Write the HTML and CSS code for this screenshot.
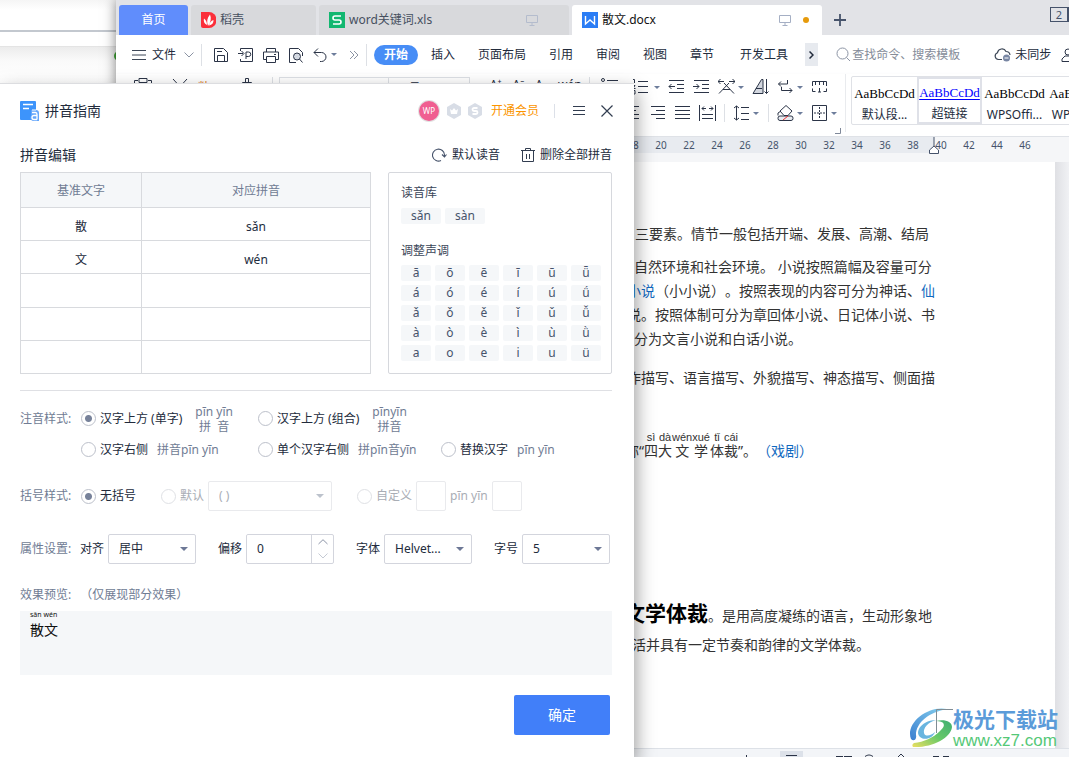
FILE: index.html
```html
<!DOCTYPE html>
<html lang="zh-CN">
<head>
<meta charset="utf-8">
<title>散文.docx</title>
<link rel="stylesheet" href="styles.css">
</head>
<body>
<div class="desktop">
  <div class="back-window"><div class="back-top"></div><div class="back-bar"></div><div class="back-body"><i class="back-dot"></i></div></div>

  <main class="app">
    <nav class="tabs">
      <button class="tab tab-home">首页</button>
      <button class="tab tab-docer">
        <svg width="15" height="16" viewBox="0 0 15 16"><path d="M0 0h8a7.500 8 0 0 1 0 16H2a2 2 0 0 1-2-2z" fill="#fb2f3a"/><path d="M7 14C5.500 10 6 6 9 2.500 10.500 6 10 10 7 14zM6 13C3 11.500 2.300 9 3 6.500 5 8 6 10 6 13zM8 13.500c.5-3 2-4.500 4.500-5.500.2 3-1.500 5-4.500 5.500z" fill="#fff"/></svg>
        <span>稻壳</span></button>
      <button class="tab tab-file">
        <svg width="16" height="16" viewBox="0 0 16 16"><rect width="16" height="16" fill="#12b770"/><path d="M12 4H6a2 2 0 0 0 0 4h4a2 2 0 0 1 0 4H4" fill="none" stroke="#fff" stroke-width="1.600"/></svg>
        <span>word关键词.xls</span>
        <svg class="screen" width="12" height="12" viewBox="0 0 12 12"><path d="M.5 1.500h11v7H.5zM6 8.500v3M3.500 11.500h5" fill="none" stroke="#b4bccd"/></svg></button>
      <button class="tab tab-file tab-current">
        <svg width="16" height="16" viewBox="0 0 16 16"><rect width="16" height="16" fill="#2b7df5"/><path d="M3.500 4v8L8 8l4.500 4V4" fill="none" stroke="#fff" stroke-width="1.400"/></svg>
        <span>散文.docx</span>
        <svg class="screen" width="12" height="12" viewBox="0 0 12 12"><path d="M.5 1.500h11v7H.5zM6 8.500v3M3.500 11.500h5" fill="none" stroke="#a5afc4"/></svg>
        <i class="unsaved"></i></button>
      <button class="plain add" aria-label="新建"><svg width="12" height="12" viewBox="0 0 12 12"><path d="M6 0v12M0 6h12" stroke="#46536b" stroke-width="1.800"/></svg></button>
      <span class="win-count">2</span>
    </nav>

    <div class="menu">
      <button class="plain file"><svg width="14" height="12" viewBox="0 0 14 12"><path d="M0 1.500h14M0 6h14M0 10.500h14" stroke="#3d4757"/></svg>文件<svg width="10" height="6" viewBox="0 0 10 6"><path d="M.5.5 5 5 9.500.5" fill="none" stroke="#8b93a3"/></svg></button>
      <i class="vsep"></i>
      <div class="quick">
        <svg width="16" height="16" viewBox="0 0 16 16"><path d="M1.500 1.500h9l4 4v9h-13zM4.500 14V8.500h7V14M4 4.500h5" /></svg>
        <svg width="16" height="16" viewBox="0 0 16 16"><path d="M2.500 4V1.500h12v13h-12V12M0 6.500h5M3.500 4l2.500 2.500L3.500 9M8 12V5h2.500a2 2 0 0 1 0 4.500H8"/></svg>
        <svg width="16" height="16" viewBox="0 0 16 16"><path d="M3.500 5V1.500h9V5M3.500 12.500h-3V5h15v7.500h-3M3.500 9.500h9v6h-9zM11 7.500h2"/></svg>
        <svg width="16" height="16" viewBox="0 0 16 16"><path d="M8 15.500H1.500v-14h9l4 4V9"/><circle cx="9" cy="9.500" r="3.500" fill="#d5dae2"/><path d="m11.500 12 3 3.500"/></svg>
        <svg width="14" height="14" viewBox="0 0 14 14"><path d="M5 .5 1 4.500l4 4M1 4.500h7.500a4.500 4.500 0 0 1 0 9H7"/></svg>
        <i class="caret"></i>
        <svg class="more" width="10" height="10" viewBox="0 0 10 10"><path d="m1 1 4 4-4 4M5 1l4 4-4 4"/></svg>
      </div>
      <i class="vsep"></i>
      <div class="ribbon-tabs">
        <button class="ribbon-tab active">开始</button><button class="ribbon-tab">插入</button><button class="ribbon-tab">页面布局</button><button class="ribbon-tab">引用</button><button class="ribbon-tab">审阅</button><button class="ribbon-tab">视图</button><button class="ribbon-tab">章节</button><button class="ribbon-tab last">开发工具</button>
      </div>
      <button class="plain next" aria-label="更多选项卡"><svg width="5" height="8" viewBox="0 0 5 8"><path d="m.5.5 3.500 3.500L.5 7.500" fill="none" stroke="#222b3c" stroke-width="1.500"/></svg></button>
      <button class="plain search"><svg width="15" height="15" viewBox="0 0 15 15"><path d="m10.500 10.500 3.500 3.500" stroke="#8d95a5"/><circle cx="6.500" cy="6.500" r="5.500" fill="none" stroke="#8d95a5"/></svg>查找命令、搜索模板</button>
      <button class="plain sync"><svg width="17" height="15" viewBox="0 0 17 15"><path d="M8 12.500H4.500A3.500 3.500 0 0 1 3.500 5.700 4.500 4.500 0 0 1 12 4.500a4 4 0 0 1 4 3.500" fill="none" stroke="#3d4757" stroke-width="1.200"/><circle cx="12.500" cy="11" r="3.500" fill="#7886a3"/><path d="M10.500 11h4" stroke="#fff"/></svg>未同步</button>
      <svg class="person" width="14" height="14" viewBox="0 0 14 14"><circle cx="7" cy="4" r="3"/><path d="M1 13.500V11l3-3h6l3 3v2.500z"/></svg>
    </div>

    <div class="tools">
      <div class="tools-left">
        <svg width="18" height="18" viewBox="0 0 18 18"><path d="M4 3.500H.5V17h17V3.500H14M5 1.500h8v4H5z"/></svg>
        <svg width="16" height="18" viewBox="0 0 16 18"><path d="m1 2 11 12M15 2 4 14"/></svg>
        <span class="orange">粘贴</span>
        <svg width="10" height="18" viewBox="0 0 10 18"><path d="M3.500 5V1.500h3V5M.5 5.500h9v8h-9z"/></svg>
        <i class="vsep"></i>
        <div class="font-box"><span>Helvetica</span><span>五号</span></div>
        <span class="glyph">A⁺</span><span class="glyph">A⁻</span><span class="glyph">A</span><span class="glyph">wén</span>
        <i class="vsep"></i>
        <svg width="17" height="16" viewBox="0 0 17 16"><circle cx="2" cy="3" r="1.500"/><circle cx="2" cy="12" r="1.500"/><path d="M6 3.500h11M6 12.500h11"/></svg>
      </div>
      <div class="tools-para">
        <div class="tool-row">
          <svg width="18" height="16" viewBox="0 0 18 16"><path d="M1 .5h1.500V4M1 6.500h2L1 9.500h2.500M1 11.500h2v3.500H1M6 2.500h10M6 7.500h10M6 13.500h10"/></svg><i class="caret"></i>
          <svg class="wide" width="17" height="16" viewBox="0 0 17 16"><path d="M1 1.500h15M9 5.500h7M9 9.500h7M1 13.500h15M7 7.500H1M3.500 5 1 7.500 3.500 10"/></svg>
          <svg class="wide" width="17" height="16" viewBox="0 0 17 16"><path d="M1 1.500h15M9 5.500h7M9 9.500h7M1 13.500h15M0 7.500h6M3.500 5 6 7.500 3.500 10"/></svg>
          <svg class="wide" width="17" height="16" viewBox="0 0 17 16"><path d="M0 2.500h6M11 2.500h6M2.500 0 0 2.500 2.500 5M14.500 0 17 2.500 14.500 5M1 14.500 11 4M6 4l10 10.500M5 10.500h7"/></svg><i class="caret"></i>
          <svg class="wide" width="17" height="16" viewBox="0 0 17 16"><path d="M1 14.500h10V.5L9.500.5zM4 9.500h6" fill="#d3d7df"/><path d="M14.500 0v14.500M12.500 12.500l2 2 2-2"/></svg>
          <svg class="wide" width="17" height="16" viewBox="0 0 17 16"><path d="M10.500 1v4H1.500M4 2.500 1.500 5 4 7.500M4.500 8v3.500H15M12.500 9l2.500 2.500-2.500 2.500"/></svg><i class="caret"></i>
          <svg class="wide" width="17" height="16" viewBox="0 0 17 16"><path d="M1.500 7V2.500h14V7M4.500 3v3M8.500 3v3M12.500 3v3M1.500 9.500v3h3M15.500 9.500v3h-3M8.500 9v4M7 13h3"/></svg>
        </div>
        <div class="tool-row">
          <svg width="8" height="16" viewBox="0 0 8 16"><path d="M0 1.500h6M0 5.500h3M0 9.500h6M0 13.500h6"/></svg>
          <svg width="17" height="16" viewBox="0 0 17 16"><path d="M2 1.500h14M7 5.500h9M2 9.500h14M7 13.500h9"/></svg>
          <svg width="17" height="16" viewBox="0 0 17 16"><path d="M1 1.500h15M1 5.500h15M1 9.500h15M1 13.500h15"/></svg>
          <svg width="17" height="16" viewBox="0 0 17 16"><path d="M.5 0v16M16.500 0v16M3 3.500h4M10 3.500h4M5 1.500l-2 2 2 2M12 1.500l2 2-2 2M3 9.500h11M3 13.500h11"/></svg>
          <i class="vsep"></i>
          <svg width="17" height="16" viewBox="0 0 17 16"><path d="M3.500 1v14M1 3l2.500-2L6 3M1 13l2.500 2L6 13M8 2.500h8M8 8.500h8M8 14.500h8"/></svg><i class="caret"></i>
          <i class="vsep"></i>
          <svg width="17" height="16" viewBox="0 0 17 16"><path d="m9 .5 6 5.500-4 4.500H7L3 6zM1 10.500V8l3-2"/><rect x="1" y="11" width="15" height="4.500" rx="2" fill="#e8ebf0"/><path d="m6 15 5-4" stroke="#e33"/></svg><i class="caret"></i>
          <svg width="17" height="16" viewBox="0 0 17 16"><path d="M1.500.5h14v15h-14z"/><path d="M8.500 2v12M3 8h11" stroke-dasharray="2 1"/></svg><i class="caret"></i>
        </div>
        <svg class="corner" width="6" height="6" viewBox="0 0 6 6"><path d="M5.500 0v5.500H0"/></svg>
      </div>
      <i class="tools-end"></i>
      <div class="gallery">
        <button class="style"><span>AaBbCcDd</span><b>默认段...</b></button>
        <button class="style link"><span>AaBbCcDd</span><b>超链接</b></button>
        <button class="style"><span>AaBbCcDd</span><b>WPSOffi...</b></button>
        <button class="style"><span>AaBbCcDd</span><b>WPSOffi...</b></button>
      </div>
    </div>

    <div class="ruler">
      <div class="ruler-used"><span>18</span><span>20</span><span>22</span><span>24</span><span>26</span><span>28</span><span>30</span><span>32</span><span>34</span><span>36</span><span>38</span></div>
      <svg class="indent" width="10" height="17" viewBox="0 0 10 17"><path d="M5 0v9M.5 16.500V13L5 9l4.500 4v3.500z" fill="#fff" stroke="#46536b"/></svg>
      <div class="ruler-rest"><span>40</span><span>42</span><span>44</span><span>46</span></div>
    </div>

    <div class="canvas">
      <article class="page">
        <p class="line shift">三要素。情节一般包括开端、发展、高潮、结局</p>
        <p class="line shift snug">自然环境和社会环境。&nbsp;小说按照篇幅及容量可分</p>
        <p class="line"><a href="#">小说</a>（小小说）。按照表现的内容可分为神话、<a href="#">仙</a></p>
        <p class="line">说。按照体制可分为章回体小说、日记体小说、书</p>
        <p class="line shift snug">分为文言小说和白话小说。</p>
        <p class="line speech">作描写、语言描写、外貌描写、神态描写、侧面描</p>
        <p class="line annotated"><span>称“<ruby>四<rt>sì</rt></ruby><ruby>大<rt>dà</rt></ruby><ruby>文<rt>wén</rt></ruby><ruby>学<rt>xué</rt></ruby><ruby>体<rt>tǐ</rt></ruby><ruby>裁<rt>cái</rt></ruby>”。<a href="#">（戏剧）</a></span></p>
        <p class="line poem"><strong>文学体裁</strong>。是用高度凝练的语言，生动形象地</p>
        <p class="line rhythm">活并具有一定节奏和韵律的文学体裁。</p>
      </article>
      <div class="scroll"></div>
    </div>
    <footer class="status">
      <svg width="210" height="8" viewBox="0 0 210 8"><path d="M6.500 6v2M96 7.500h7M104 7.500h8M125 7.500c3-2 5-2 8 0M158 8l3-3 3 3M193 7.500h6M203 7.500h6"/><rect x="40" y="2" width="23" height="6" fill="#dce1e9" stroke="none"/><path d="M46 6.500h11"/></svg>
    </footer>
  </main>

  <div class="watermark">
    <svg width="44" height="42" viewBox="0 0 44 42"><defs><linearGradient id="wb" x1="0" y1="1" x2="1" y2="0"><stop offset="0" stop-color="#3b7fd0"/><stop offset="1" stop-color="#86d1ee"/></linearGradient><linearGradient id="wg" x1="0" y1="1" x2="1" y2="0"><stop offset="0" stop-color="#ecdf62"/><stop offset=".5" stop-color="#68c968"/><stop offset="1" stop-color="#3fae72"/></linearGradient></defs><path d="M38 2C18-2-4 17 2 32c3 3 6 0 5-4C7 15 21 5 38 2z" fill="url(#wb)"/><path d="M27 13C14 13 5 24 11 30c5 4 13 1 15-5-4 4-10 5-11 1-1-5 4-11 12-13z" fill="#69b5df"/><path d="M27 14c8 0 11 4 4 10C24 31 15 35 5 36c-2 1-2 3-1 4C23 41 42 31 43 20c0-6-8-8-16-6z" fill="url(#wg)"/><path d="M27.500 26V2.500H44" fill="none" stroke="#7f8c94" stroke-width="1"/></svg>
    <div class="mark-text"><strong>极光下载站</strong><span>www.xz7.com</span></div>
  </div>

  <section class="dialog" role="dialog" aria-labelledby="dlg-title">
    <header class="dlg-head">
      <svg width="20" height="22" viewBox="0 0 20 22"><rect y="1" width="16" height="19" rx="1" fill="#3d94fb"/><path d="M3 4.500h10M3 8.500h6" stroke="#fff" stroke-width="1.300"/><path d="M11 10h5a3 3 0 0 1 3 3v8h-6a3 3 0 0 1-2-5z" fill="#64a6fb"/><path d="M12 12.500h3.500q1.500 0 1.500 2v5M17 15.500h-3a2 2 0 0 0 0 4h3" fill="none" stroke="#fff" stroke-width="1.300"/><path d="M12 10h4" stroke="#fff"/></svg>
      <h1 id="dlg-title">拼音指南</h1>
      <span class="avatar">WP</span>
      <svg class="badge" width="14" height="16" viewBox="0 0 14 16"><path d="m7 0 7 4v8l-7 4-7-4V4z" fill="#d8dde6"/><path d="m3 6 2 1.500L7 5l2 2.500L11 6l-1 5H4z" fill="#fff"/></svg>
      <svg class="badge" width="14" height="16" viewBox="0 0 14 16"><path d="m7 0 7 4v8l-7 4-7-4V4z" fill="#d8dde6"/><path d="M9.500 5H6a1.500 1.500 0 0 0 0 3h2a1.500 1.500 0 0 1 0 3H4.500" fill="none" stroke="#fff" stroke-width="1.800"/></svg>
      <a class="vip" href="#">开通会员</a>
      <i class="head-sep"></i>
      <button class="plain" aria-label="菜单"><svg width="12" height="11" viewBox="0 0 12 11"><path d="M0 1.500h12M0 5.500h12M0 9.500h12" stroke="#323d50"/></svg></button>
      <button class="plain close" aria-label="关闭"><svg width="12" height="12" viewBox="0 0 12 12"><path d="m.5.5 11 11M11.500.5l-11 11" stroke="#323d50" stroke-width="1.200"/></svg></button>
    </header>

    <div class="edit-head">
      <h2>拼音编辑</h2>
      <button class="plain action"><svg width="15" height="14" viewBox="0 0 15 14"><path d="M9 12.600A6 6 0 1 1 12.500 7v1M10 6.500l2.500 2.500L14.500 6.500" fill="none" stroke="#46536b" stroke-width="1.100"/></svg>默认读音</button>
      <button class="plain action"><svg width="14" height="14" viewBox="0 0 14 14"><path d="M0 2.500h14M4.500 2.500v-2h5v2M1.500 2.500v11h11v-11M5.500 6v5M8.500 6v5" fill="none" stroke="#323d50"/></svg>删除全部拼音</button>
    </div>

    <div class="edit-body">
      <table class="words">
        <thead><tr><th>基准文字</th><th>对应拼音</th></tr></thead>
        <tbody><tr><td>散</td><td>sǎn</td></tr><tr><td>文</td><td>wén</td></tr><tr><td></td><td></td></tr><tr><td></td><td></td></tr><tr><td></td><td></td></tr></tbody>
      </table>
      <div class="sounds">
        <h3>读音库</h3>
        <div class="readings"><button class="key">sǎn</button><button class="key">sàn</button></div>
        <h3>调整声调</h3>
        <div class="tones">
          <button class="key">ā</button><button class="key">ō</button><button class="key">ē</button><button class="key">ī</button><button class="key">ū</button><button class="key">ǖ</button>
          <button class="key">á</button><button class="key">ó</button><button class="key">é</button><button class="key">í</button><button class="key">ú</button><button class="key">ǘ</button>
          <button class="key">ǎ</button><button class="key">ǒ</button><button class="key">ě</button><button class="key">ǐ</button><button class="key">ǔ</button><button class="key">ǚ</button>
          <button class="key">à</button><button class="key">ò</button><button class="key">è</button><button class="key">ì</button><button class="key">ù</button><button class="key">ǜ</button>
          <button class="key">a</button><button class="key">o</button><button class="key">e</button><button class="key">i</button><button class="key">u</button><button class="key">ü</button>
        </div>
      </div>
    </div>

    <div class="modes">
      <span class="caption">注音样式:</span>
      <label class="opt"><input type="radio" name="mode" checked><span>汉字上方 (单字)</span><em class="stack"><i>pīn yīn</i><i>拼&nbsp; 音</i></em></label>
      <label class="opt"><input type="radio" name="mode"><span>汉字上方 (组合)</span><em class="stack"><i>pīnyīn</i><i>拼音</i></em></label>
      <label class="opt second"><input type="radio" name="mode"><span>汉字右侧</span><em>拼音pīn yīn</em></label>
      <label class="opt"><input type="radio" name="mode"><span>单个汉字右侧</span><em>拼pīn音yīn</em></label>
      <label class="opt"><input type="radio" name="mode"><span>替换汉字</span><em>pīn yīn</em></label>
    </div>

    <div class="brackets">
      <span class="caption">括号样式:</span>
      <label class="opt"><input type="radio" name="bracket" checked><span>无括号</span></label>
      <div class="field off">
        <label class="opt"><input type="radio" name="bracket" disabled><span>默认</span></label>
        <span class="select select-wide"><select disabled aria-label="默认括号"><option>( )</option></select></span>
      </div>
      <div class="field off">
        <label class="opt"><input type="radio" name="bracket" disabled><span>自定义</span></label>
        <input class="mini" type="text" disabled aria-label="左括号"><span>pīn yīn</span><input class="mini" type="text" disabled aria-label="右括号">
      </div>
    </div>

    <div class="props">
      <span class="caption">属性设置:</span>
      <div class="field"><label for="align">对齐</label><span class="select"><select id="align"><option>居中</option></select></span></div>
      <div class="field"><label for="offset">偏移</label><span class="spin"><input id="offset" type="text" value="0"><span class="steps"><button aria-label="增加"><svg width="10" height="6" viewBox="0 0 10 6"><path d="M.5 5 5 .7 9.500 5" fill="none" stroke="#8b93a6"/></svg></button><button aria-label="减少"><svg width="10" height="6" viewBox="0 0 10 6"><path d="M.5.5 5 5 9.500.5" fill="none" stroke="#c5cad4"/></svg></button></span></span></div>
      <div class="field"><label for="font">字体</label><span class="select"><select id="font"><option>Helvet...</option></select></span></div>
      <div class="field"><label for="size">字号</label><span class="select"><select id="size"><option>5</option></select></span></div>
    </div>

    <div class="preview-caption">效果预览:<span>（仅展现部分效果）</span></div>
    <div class="preview"><div class="tiny">sǎn wén</div><div class="sample">散文</div></div>
    <button class="ok">确定</button>
  </section>
</div>
</body>
</html>
```
FILE: styles.css
```css
* { box-sizing: border-box; }
body, h1, h2, h3, p { margin: 0; }
body, button, input, select {
  font-family: "Noto Sans", "Noto Sans CJK SC", sans-serif;
  font-size: 12px;
  line-height: 16px;
  color: #222b3c;
}
body { text-spacing-trim: space-all; }
button { border: 0; padding: 0; background: none; white-space: nowrap; }
svg { flex: none; }
i, em { font-style: normal; }
a { text-decoration: none; }
.plain { display: flex; flex: none; align-items: center; }
.desktop { position: relative; height: 100vh; overflow: hidden; background: #fff; }

/* window behind everything */
.back-window { position: absolute; z-index: 0; left: 0; top: 0; width: 116px; height: 84px; display: flex; flex-direction: column; }
.back-top { height: 32px; border-bottom: 2px solid #c3c8cf; background: linear-gradient(#f5f5f5, #fff 10px); }
.back-bar { height: 15px; border-bottom: 1px solid #e4e4e4; background: #fff; }
.back-body { flex: 1; background: linear-gradient(#ececec, #fafafa 14px, #fff); display: flex; justify-content: flex-end; padding-top: 4px; overflow: hidden; }
.back-dot { width: 10px; height: 10px; border-radius: 5px; background: #3fa535; margin-right: -8px; }

/* editor window */
.app { position: absolute; z-index: 1; left: 116px; top: 0; right: 0; bottom: 0; display: flex; flex-direction: column; overflow: hidden; background: #fff; box-shadow: 0 0 12px rgba(0, 0, 0, .5); }
.tabs { flex: none; display: flex; gap: 3px; height: 35px; padding: 5px 0 0 3px; background: #e2e3e7; }
.tab { flex: none; display: flex; align-items: center; gap: 4px; padding: 0 10px; border-radius: 3px 3px 0 0; background: #d8d9dc; color: #46505f; }
.tab-home { width: 69px; justify-content: center; background: #608dfc; color: #fff; }
.tab-docer { width: 125px; }
.tab-file { width: 250px; }
.screen { margin-left: auto; margin-right: 21px; }
.tab-current { background: #fff; color: #111; }
.tab-current .screen { margin-right: 8px; }
.unsaved { width: 6px; height: 6px; border-radius: 3px; background: #e69a0b; margin-right: 3px; }
.add { margin-left: 9px; }
.win-count { width: 20px; height: 15px; margin: 2px -1px 0 auto; border: 1px solid #46536b; border-right-width: 3px; font-size: 11px; line-height: 13px; text-align: center; color: #46536b; }

.menu { flex: none; display: flex; align-items: center; height: 39px; padding-left: 16px; white-space: nowrap; }
.file { gap: 6px; }
.file svg:last-child { margin-left: 2px; }
.vsep { flex: none; width: 1px; height: 22px; background: #dde0e5; }
.menu > .vsep { margin: 0 7px; }
.quick { flex: none; display: flex; align-items: center; gap: 9px; padding-left: 4px; }
.quick svg, .tools svg, .person, .status svg { fill: none; stroke: #2b3447; }
.caret { flex: none; border: 3px solid transparent; border-top: 3px solid #6d7d9b; border-bottom: 0; }
.quick .caret { margin-left: -5px; }
.quick .more { stroke: #8b93a3; margin-left: 3px; }
.ribbon-tabs { flex: none; display: flex; gap: 23px; }
.ribbon-tab.active { width: 44px; height: 20px; margin-right: -10px; border-radius: 10px; background: #478df6; color: #fff; font-weight: bold; }
.ribbon-tab.last { margin-left: 3px; }
.next { justify-content: center; width: 13px; height: 23px; margin-left: 17px; background: #e7eaef; }
.search { margin-left: 18px; gap: 1px; color: #858c99; }
.sync { margin-left: 34px; gap: 4px; }
.person { margin-left: 10px; }

.tools { flex: none; display: flex; align-items: flex-start; height: 63px; border-bottom: 1px solid #dfe2e7; box-shadow: 0 2px 4px #e8e9ec; }
.tools-left { flex: none; display: flex; width: 502px; height: 55px; align-items: flex-start; padding: 3px 0 0 18px; gap: 20px; }
.orange { width: 14px; margin-left: -10px; overflow: hidden; color: #e07b19; line-height: 22px; }
.tools-left .vsep { height: 44px; }
.font-box { display: flex; width: 196px; height: 26px; margin-left: -14px; border: 1px solid #dde0e5; }
.tools-left .orange + svg { margin-left: 10px; }
.font-box span { flex: 1; padding: 3px 8px; border-right: 1px solid #dde0e5; }
.font-box span + span { flex: none; width: 80px; border: 0; }
.glyph { width: 12px; margin-right: -9px; line-height: 16px; white-space: nowrap; }
.glyph + .vsep { margin-left: 8px; }
.tools-left .vsep + svg { margin-left: -9px; }
.tools-para { flex: none; width: 228px; padding: 5px 0 0 14px; }
.tool-row { display: flex; align-items: center; gap: 4px; height: 16px; margin-bottom: 10px; }
.tool-row + .tool-row { gap: 8px; margin-bottom: 7px; padding-left: 1px; }
.tool-row .wide { margin-left: 4px; }
.tool-row .wide + .caret { margin-left: -1px; }
.tool-row + .tool-row .caret { margin-left: -5px; }
.tool-row .caret + .vsep { margin-left: 1px; }
.tool-row .vsep { height: 18px; }
.tools .corner { display: block; margin-left: auto; margin-right: 5px; stroke: #7f8899; }
.tools-end { flex: none; width: 1px; height: 58px; margin: 0 5px 0 -1px; background: #e9ebee; }
.gallery { flex: none; display: flex; height: 49px; margin-top: 2px; border: 1px solid #dfe1e6; border-radius: 2px; }
.style { flex: none; width: 65px; height: 47px; padding: 7px 0 0; }
.style span { display: block; font-family: "Liberation Serif", serif; font-size: 13px; line-height: 18px; color: #000; }
.style b { display: block; margin-top: 4px; font-weight: normal; line-height: 16px; }
.style.link { border: 2px solid #dfe1e8; padding: 5px 0 0; }
.link span { color: #00f; text-decoration: underline; text-underline-offset: 2px; }

.ruler { flex: none; display: flex; height: 25px; background: #f5f6f8; font-size: 10px; line-height: 16px; color: #46536b; }
.ruler span { flex: none; width: 28px; text-align: center; }
.ruler-used { flex: none; display: flex; width: 818px; height: 16px; padding-left: 503px; background: #e8ebf0; }
.indent { margin: 0 -5px; z-index: 1; }
.ruler-rest { display: flex; margin-left: -7px; }
.canvas { flex: 1; min-height: 0; display: flex; }
.page { flex: 1; min-width: 0; padding: 60px 0 0 508px; background: #fff; color: #333; overflow: hidden; }
.scroll { flex: none; width: 14px; background: linear-gradient(90deg, #dfe0e4, #f0f1f4); }
.line { padding-left: 3px; font-size: 14px; line-height: 24px; white-space: nowrap; }
.line a { color: #1169c0; }
.shift { padding-left: 11px; margin-bottom: 9px; }
.snug { padding-left: 10px; margin-bottom: 0; }
.speech { margin-top: 15px; }
.annotated { display: flex; align-items: flex-end; height: 73px; padding-left: 1px; }
rt { font-family: "Liberation Sans", sans-serif; font-size: 11px; line-height: 12px; }
.poem { padding-left: 0; margin-top: 135px; line-height: 30px; }
.poem strong { font-size: 21px; color: #000; }
.rhythm { padding-left: 8px; margin-top: 2px; }
.status { flex: none; height: 9px; padding-left: 624px; border-top: 1px solid #dde1e7; background: #f3f5f8; }
.status svg { display: block; }

.watermark { position: absolute; z-index: 2; right: 11px; bottom: 8px; display: flex; align-items: flex-end; }
.mark-text { display: flex; flex-direction: column; white-space: nowrap; }
.mark-text strong { font-size: 21px; line-height: 26px; color: #5b9bd9; }
.mark-text span { font-family: "Liberation Sans", sans-serif; font-size: 17px; line-height: 17px; color: #55c878; }

/* pinyin dialog */
.dialog { position: absolute; z-index: 3; left: 0; top: 83px; bottom: 0; width: 634px; padding: 0 22px 0 20px; border-top: 1px solid #dcdde0; background: #fff; box-shadow: 2px 8px 18px rgba(0, 0, 0, .4); }
.dlg-head { display: flex; align-items: center; height: 53px; }
.dlg-head h1 { flex: 1; margin-left: 5px; font-size: 14px; font-weight: normal; line-height: 20px; }
.avatar { width: 20px; height: 20px; border-radius: 10px; background: #f05f91; color: #fff; font-size: 8px; line-height: 20px; text-align: center; box-shadow: 0 0 0 1px #e2e2e2; }
.badge { margin-left: 7px; }
.avatar + .badge { margin-left: 8px; }
.vip { margin-left: 9px; color: #fb9500; }
.head-sep { width: 1px; height: 14px; margin: 0 18px 0 15px; background: #dce0e8; }
.close { margin-left: 16px; margin-right: -1px; }
.edit-head { display: flex; align-items: center; height: 35px; gap: 21px; }
.edit-head h2 { flex: 1; font-size: 14px; font-weight: normal; line-height: 20px; }
.action { gap: 5px; }
.edit-body { display: flex; gap: 17px; padding-bottom: 16px; border-bottom: 1px solid #dfe0e4; }
.words { flex: 1; height: 202px; table-layout: fixed; border-collapse: collapse; text-align: center; }
.words th, .words td { height: 33px; padding: 0; border: 1px solid #d8dade; }
.words td { padding-top: 6px; }
.words th { height: 35px; padding-top: 2px; background: #f5f7f9; font-weight: normal; color: #707c94; }
.words th:first-child { width: 121px; }
.sounds { width: 224px; padding: 12px 10px 10px 12px; border: 1px solid #d6d8dd; border-radius: 2px; }
.sounds h3 { font-size: 12px; font-weight: normal; line-height: 16px; color: #3a4558; }
.readings { display: flex; gap: 4px; margin: 7px 0 19px; }
.key { height: 16px; border-radius: 2px; background: #f5f7f9; line-height: 16px; color: #46536b; }
.readings .key { width: 40px; }
.tones { display: grid; grid-template-columns: repeat(6, 30px); gap: 4px; margin-top: 6px; }

.caption { flex: none; width: 61px; color: #707c94; }
.modes { display: grid; grid-template-columns: 61px 177px 183px 1fr; grid-auto-rows: 31px; align-items: center; padding-top: 12px; }
.second { grid-column: 2; }
.opt { display: flex; align-items: center; gap: 4px; white-space: nowrap; }
.opt em { margin-left: 5px; color: #707c94; }
.opt .stack { display: flex; flex-direction: column; align-items: center; margin-left: 9px; }
.stack i { line-height: 15px; }
.opt input { appearance: none; flex: none; width: 15px; height: 15px; margin: 0; border: 1px solid #bcc0ca; border-radius: 8px; background: #fff; }
.opt input:checked { background: radial-gradient(circle, #77829a 3px, #fff 4px); }
.brackets, .props { display: flex; align-items: center; height: 30px; }
.brackets { gap: 25px; margin-top: 16px; }
.brackets .caption { margin-right: -25px; }
.field { flex: none; display: flex; align-items: center; gap: 4px; white-space: nowrap; }
.off { color: #a9adb5; }
.off .opt input { border-color: #dfe1e5; }
.select { position: relative; width: 88px; height: 30px; }
.select-wide { width: 124px; }
.select select { appearance: none; width: 100%; height: 30px; padding: 0 10px; border: 1px solid #d3d5dd; border-radius: 2px; background: #fff; opacity: 1; }
.select::after { content: ""; position: absolute; right: 8px; top: 13px; border: 4px solid transparent; border-top-color: #6d7896; border-bottom: 0; }
.off .select select, .off .mini { border-color: #e9eaed; color: #a9adb5; }
.off .select::after { border-top-color: #bcc2cc; }
.mini { width: 30px; height: 30px; padding: 0 4px; border: 1px solid; border-radius: 2px; background: #fff; }
.props { gap: 22px; margin-top: 23px; }
.props .caption { width: 60px; margin-right: -22px; }
.spin { display: flex; width: 88px; height: 30px; border: 1px solid #d3d5dd; border-radius: 2px; }
.spin input { flex: 1; min-width: 0; padding: 0 10px; border: 0; border-radius: 2px; }
.steps { display: flex; flex-direction: column; width: 22px; border-left: 1px solid #d3d5dd; }
.steps button { flex: 1; display: flex; align-items: center; justify-content: center; }
.preview-caption { margin-top: 23px; color: #707c94; }
.preview-caption span { margin-left: 9px; }
.preview { height: 64px; margin-top: 8px; padding: 0 10px; background: #f5f7f9; color: #111; }
.tiny { font-size: 7px; line-height: 8px; }
.sample { font-size: 14px; line-height: 22px; }
.ok { display: block; width: 96px; height: 40px; margin: 20px 2px 0 auto; border-radius: 2px; background: #417ff9; color: #fff; font-size: 14px; }
```
